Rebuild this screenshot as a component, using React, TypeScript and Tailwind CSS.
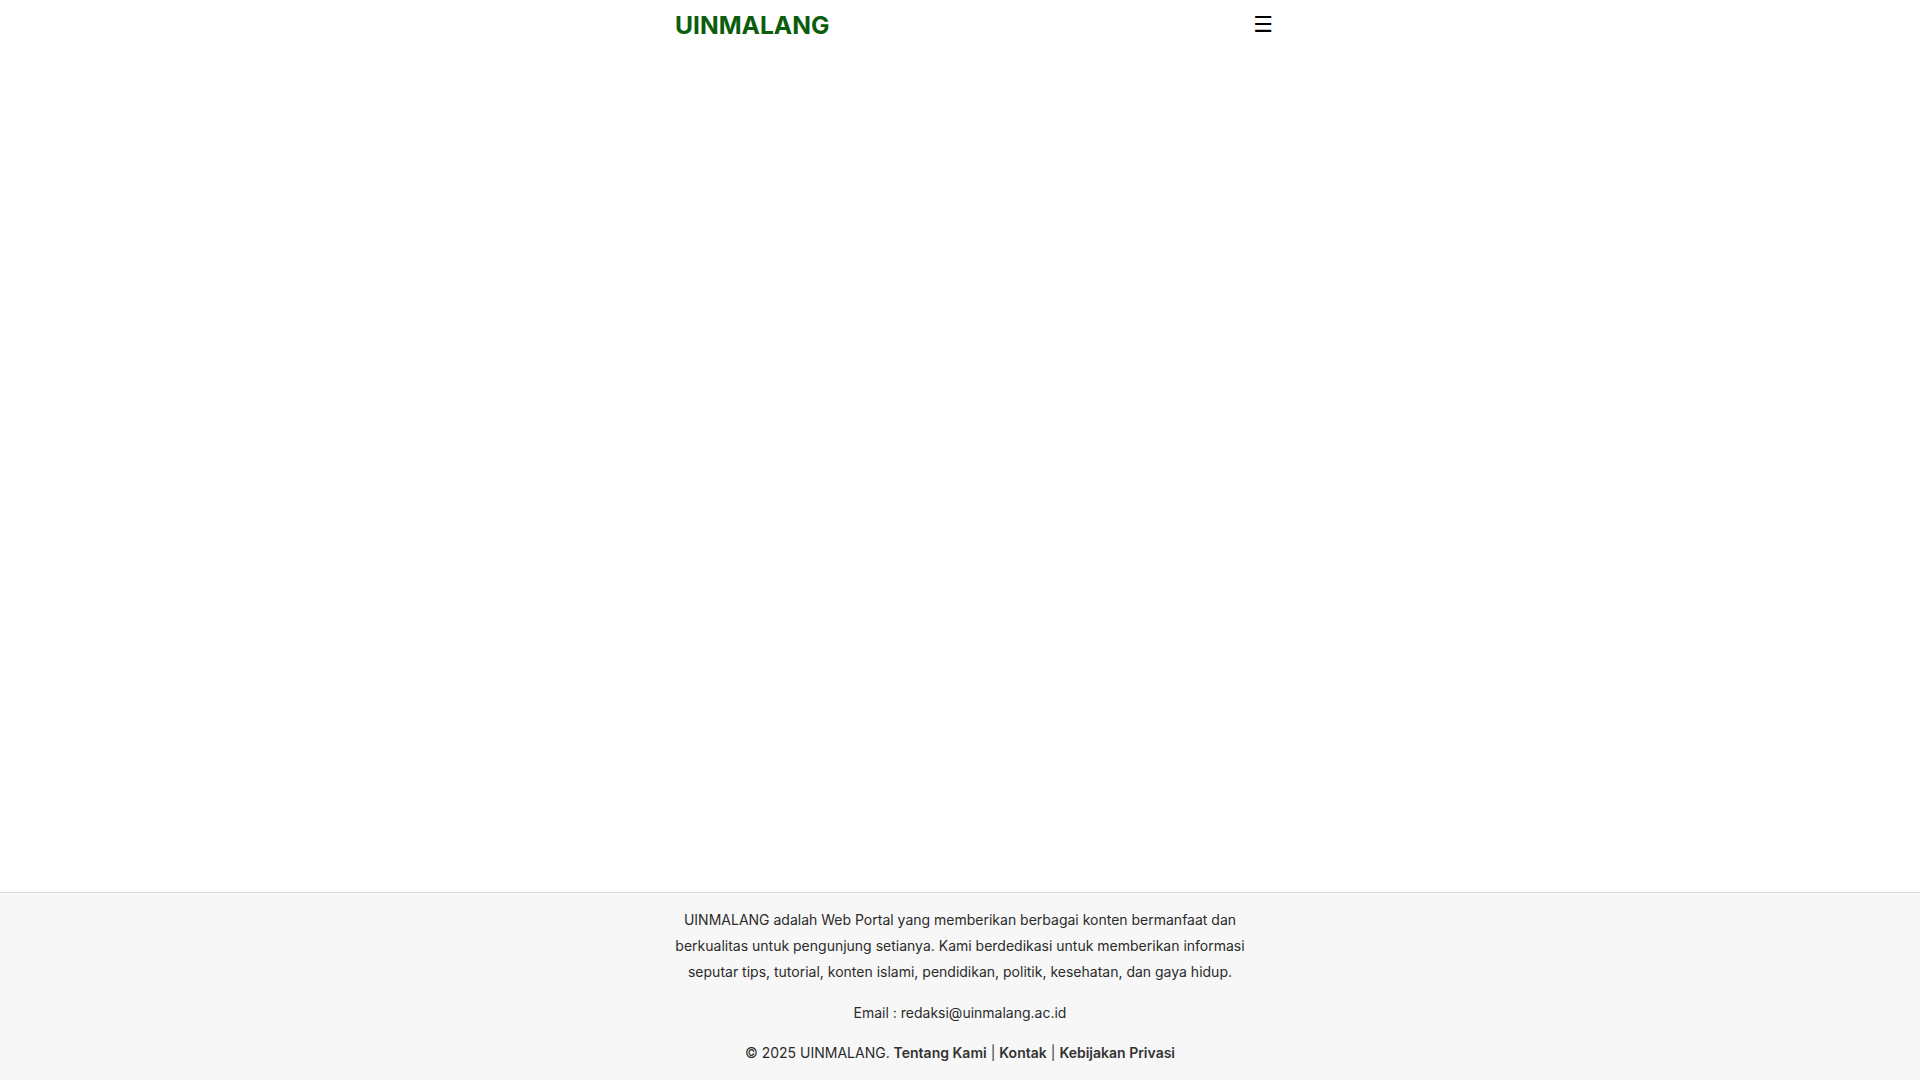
export default function App() {
  return (
    <div className="min-h-screen flex flex-col bg-white text-[#222] font-['Inter','Liberation_Sans',sans-serif]">
      <header className="h-[50px] w-full">
        <div className="w-[600px] mx-auto h-full flex items-center justify-between pl-[15px] pr-0">
          <a href="#" className="text-[24.6px] font-bold text-[#0a5d0a] leading-none">
            UINMALANG
          </a>
          <button className="text-[22px] leading-none text-black translate-x-[13px] font-['DejaVu_Sans',sans-serif]">
            ☰
          </button>
        </div>
      </header>

      <main className="flex-1" />

      <footer className="bg-[#f7f7f7] border-t border-[#dddddd] pt-[14px] pb-[14px]">
        <div className="w-[612px] mx-auto px-4 text-center text-[14px] leading-[25.7px] text-[#2b2b2b] flex flex-col gap-[15px]">
          <p>
            UINMALANG adalah Web Portal yang memberikan berbagai konten bermanfaat dan berkualitas untuk
            pengunjung setianya. Kami berdedikasi untuk memberikan informasi seputar tips, tutorial, konten
            islami, pendidikan, politik, kesehatan, dan gaya hidup.
          </p>
          <p>Email : redaksi@uinmalang.ac.id</p>
          <p>
            © 2025 UINMALANG.{' '}
            <a href="#" className="font-semibold text-[#333]">Tentang Kami</a>
            <span className="mx-[4px] text-[#333]">|</span>
            <a href="#" className="font-semibold text-[#333]">Kontak</a>
            <span className="mx-[4px] text-[#333]">|</span>
            <a href="#" className="font-semibold text-[#333]">Kebijakan Privasi</a>
          </p>
        </div>
      </footer>
    </div>
  );
}
